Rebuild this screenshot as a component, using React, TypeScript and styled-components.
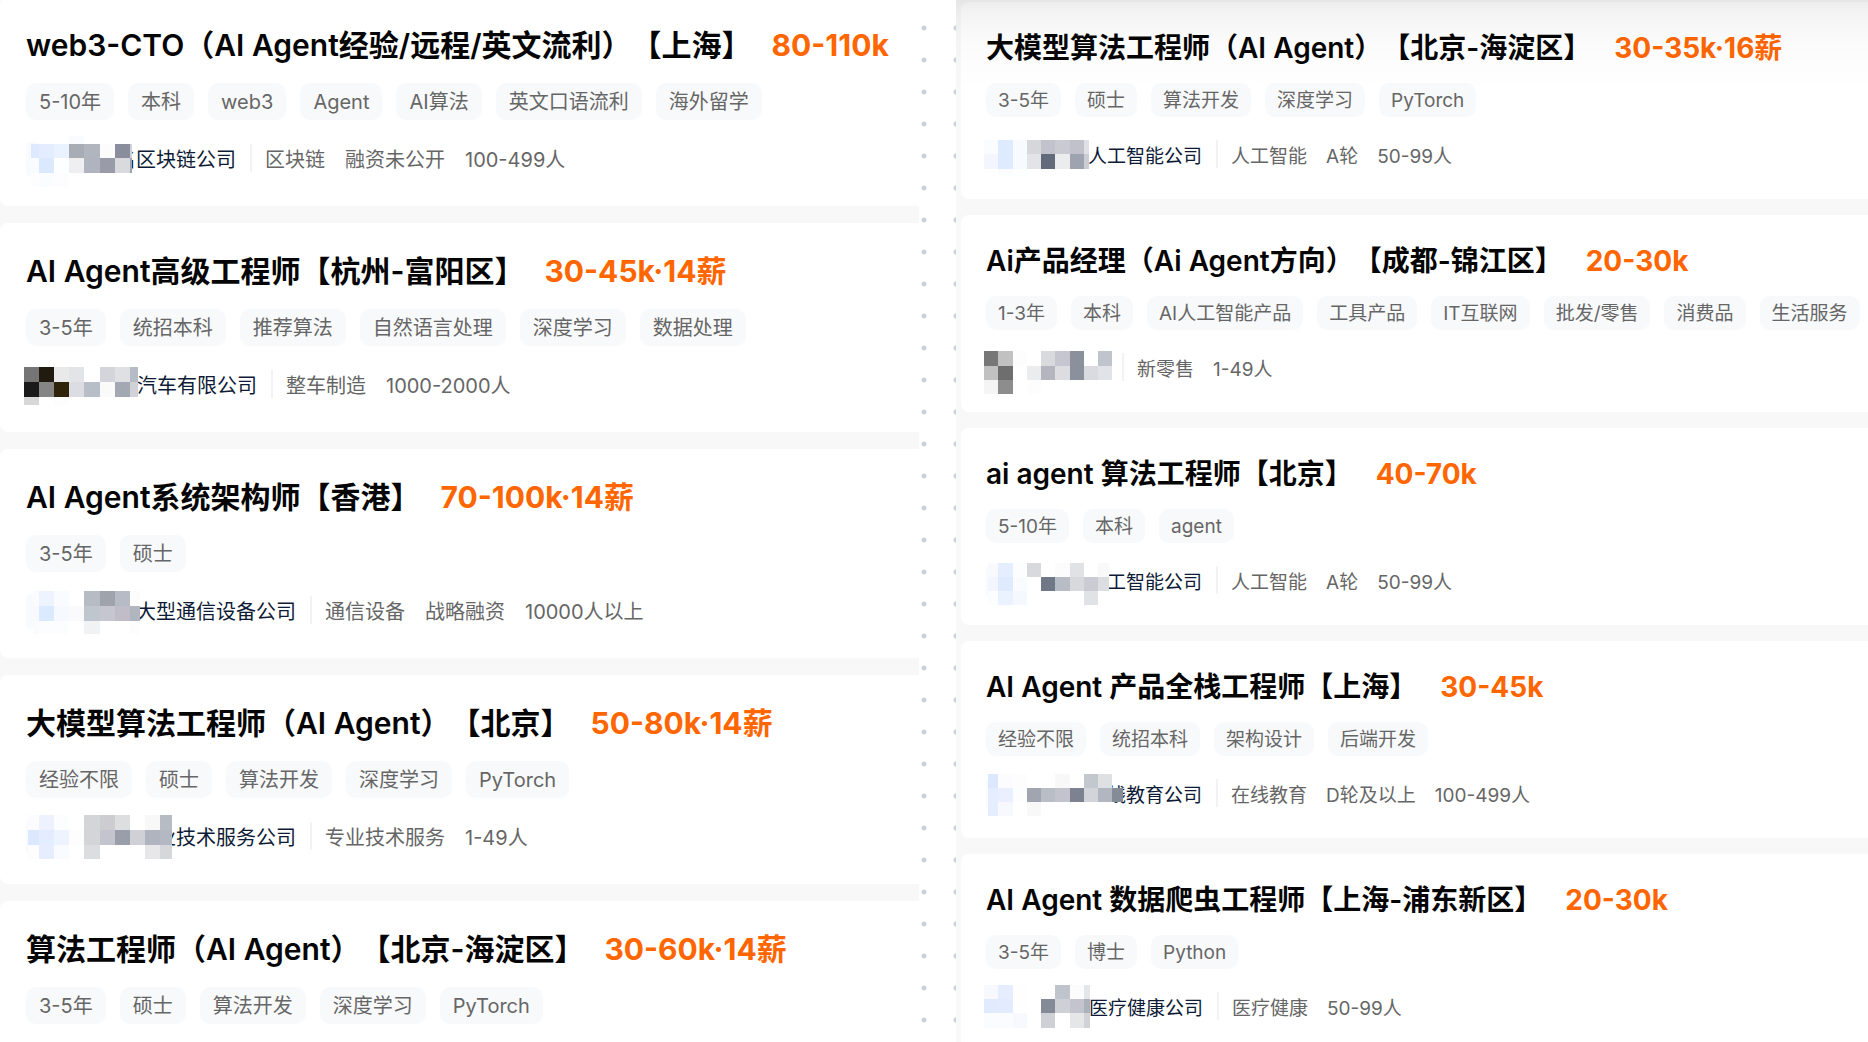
import React from 'react';
import styled, { createGlobalStyle } from 'styled-components';

const GlobalStyle = createGlobalStyle`
  * { box-sizing: border-box; }
  body {
    margin: 0;
    background: #ffffff;
    font-family: Inter, "Noto Sans CJK SC", sans-serif;
    text-spacing-trim: space-all;
  }
`;

type Size = 'large' | 'small';

const sizes = {
  large: { title: 30, text: 20, tagHeight: 37, tagPad: 13, tagGap: 14, logo: 36, top: 28, left: 26, bottom: 29, tagTop: 18, gap: 17, meta: 20 },
  small: { title: 28, text: 19, tagHeight: 34, tagPad: 12, tagGap: 14, logo: 34, top: 26, left: 25, bottom: 27, tagTop: 15, gap: 16, meta: 19 },
};

const Page = styled.main`
  display: grid;
  grid-template-columns: 919fr 37px 912fr;
  height: 100vh;
  overflow: hidden;
`;

const Panel = styled.section<{ $size: Size }>`
  position: relative;
  min-width: 0;
  overflow: hidden;
  background: #f8f8f8;
  padding-left: ${(p) => (p.$size === 'small' ? 5 : 0)}px;
`;

const TopShade = styled.div`
  position: absolute;
  inset: 0 0 auto 0;
  height: 92px;
  pointer-events: none;
  background: linear-gradient(rgba(0, 0, 0, 0.075), rgba(0, 0, 0, 0.045) 16%, rgba(0, 0, 0, 0.02) 42%, rgba(0, 0, 0, 0.006) 72%, transparent);
`;

const Gutter = styled.div`
  background: radial-gradient(circle, #cbd0da 2px, transparent 3px) -11px 12px / 32px 32px;
`;

const Feed = styled.ul<{ $size: Size }>`
  display: flex;
  flex-direction: column;
  gap: ${(p) => sizes[p.$size].gap}px;
  list-style: none;
  padding: 0;
  margin: ${(p) => (p.$size === 'small' ? 2 : -3)}px 0 0;
`;

const Card = styled.li<{ $size: Size }>`
  padding: ${(p) => `${sizes[p.$size].top}px 0 ${sizes[p.$size].bottom}px ${sizes[p.$size].left}px`};
  background: #ffffff;
  border-radius: 8px 0 0 8px;
  white-space: nowrap;
`;

const Heading = styled.div<{ $size: Size }>`
  display: flex;
  gap: ${(p) => (p.$size === 'small' ? 23 : 20)}px;
  font-size: ${(p) => sizes[p.$size].title}px;
  line-height: 40px;
`;

const Title = styled.h2`
  margin: 0;
  font-size: inherit;
  font-weight: 600;
  color: #050505;
`;

const Salary = styled.span`
  font-weight: 700;
  color: #ff6600;
`;

const Tags = styled.ul<{ $size: Size }>`
  display: flex;
  gap: ${(p) => sizes[p.$size].tagGap}px;
  margin: ${(p) => sizes[p.$size].tagTop}px 0 21px;
  padding: 0;
  list-style: none;
`;

const Tag = styled.li<{ $size: Size }>`
  height: ${(p) => sizes[p.$size].tagHeight}px;
  line-height: ${(p) => sizes[p.$size].tagHeight}px;
  padding: 1px ${(p) => sizes[p.$size].tagPad}px 0;
  border-radius: 10px;
  background: #f8f9fb;
  color: #666666;
  font-size: ${(p) => sizes[p.$size].text}px;
`;

const CompanyRow = styled.div<{ $size: Size }>`
  display: flex;
  align-items: center;
  height: ${(p) => sizes[p.$size].logo}px;
  padding-bottom: 2px;
  font-size: ${(p) => sizes[p.$size].text}px;
  color: #666666;
`;

const MosaicArt = styled.svg`
  position: relative;
  z-index: 1;
  flex: none;
  align-self: flex-start;
  overflow: visible;
  margin-left: -2px;
`;

const CompanyName = styled.span<{ $overlap: number }>`
  margin-left: -${(p) => p.$overlap}px;
  color: #0e1b36;
`;

const Divider = styled.span<{ $wide: boolean }>`
  width: 2px;
  height: 28px;
  margin: 0 13px 0 ${(p) => (p.$wide ? 14 : 10)}px;
  background: #f1f3f9;
`;

const Meta = styled.span<{ $size: Size }>`
  margin-right: ${(p) => sizes[p.$size].meta}px;
`;

type Band = { y: number; h: number; c: string };
type Company = { width: number; inset?: number; bands: Band[]; name?: string; overlap?: number; meta: string[] };
type Job = { title: string; salary: string; tags: string[]; company?: Company };

function Mosaic({ width, inset = 0, bands, size }: { width: number; inset?: number; bands: Band[]; size: Size }) {
  const cell = size === 'large' ? 15.1 : 14.25;
  const edge = (i: number) => Math.max(inset, Math.min(width, Math.round(i * cell)));
  return (
    <MosaicArt width={width} height={sizes[size].logo} shapeRendering="crispEdges" aria-hidden="true">
      {inset > 0 && <rect x={2} y={1} width={14} height={sizes[size].logo - 1} rx={5} fill="#f9fafe" />}
      {bands.map((band) =>
        band.c.split(' ').map((color, i) =>
          color === '-' ? null : (
            <rect key={`${band.y}-${i}`} x={edge(i)} y={band.y} width={edge(i + 1) - edge(i)} height={band.h} fill={`#${color}`} />
          ),
        ),
      )}
    </MosaicArt>
  );
}

const leftJobs: Job[] = [
  {
    title: 'web3-CTO（AI Agent经验/远程/英文流利）【上海】',
    salary: '80-110k',
    tags: ['5-10年', '本科', 'web3', 'Agent', 'AI算法', '英文口语流利', '海外留学'],
    company: {
      width: 108,
      inset: 7,
      name: '名区块链公司',
      overlap: 16,
      meta: ['区块链', '融资未公开', '100-499人'],
      bands: [
        { y: -5, h: 8, c: '- - - fafbff' },
        { y: 3, h: 14, c: 'dde9ff e4ecff eaf1ff a8acb5 b1b5be fcfcfc 8a8e9c d0d2d8' },
        { y: 17, h: 15, c: 'fafbff dbe9ff fdfeff efeff1 b0b4be 999ca8 d9dade 9fa3ad' },
        { y: 32, h: 14, c: 'fdfdff fbfcff fdfdff' },
      ],
    },
  },
  {
    title: 'AI Agent高级工程师【杭州-富阳区】',
    salary: '30-45k·14薪',
    tags: ['3-5年', '统招本科', '推荐算法', '自然语言处理', '深度学习', '数据处理'],
    company: {
      width: 114,
      name: '汽车有限公司',
      overlap: 1,
      meta: ['整车制造', '1000-2000人'],
      bands: [
        { y: 0, h: 15, c: '757575 211a0f e9e9e9 e3e4e7 - d4d5da dfe0e3 b6bcc6' },
        { y: 15, h: 15, c: '1a1a1a 858585 30230b dcdde2 b8bec8 fafafa a3a8b2 d0d2d7' },
        { y: 30, h: 8, c: 'd8d8d8 - fdfdfd' },
      ],
    },
  },
  {
    title: 'AI Agent系统架构师【香港】',
    salary: '70-100k·14薪',
    tags: ['3-5年', '硕士'],
    company: {
      width: 116,
      inset: 9,
      name: '大型通信设备公司',
      overlap: 4,
      meta: ['通信设备', '战略融资', '10000人以上'],
      bands: [
        { y: -2, h: 15, c: 'fafbff edf3ff f9fbff - b6bbc4 9fa3ac b7bbc5 fcfcfc' },
        { y: 13, h: 15, c: 'f7f9ff dceaff f6f9ff fafafc c0c6cd c6c6d0 c0bdc8 b0b5bf' },
        { y: 28, h: 13, c: 'fafbff fcfdff fcfdff - f0f2f4 - - fdfdfd' },
      ],
    },
  },
  {
    title: '大模型算法工程师（AI Agent）【北京】',
    salary: '50-80k·14薪',
    tags: ['经验不限', '硕士', '算法开发', '深度学习', 'PyTorch'],
    company: {
      width: 148,
      inset: 4,
      name: '业技术服务公司',
      overlap: 16,
      meta: ['专业技术服务', '1-49人'],
      bands: [
        { y: -4, h: 15, c: 'fcfcff eef2ff fcfdff - d4d5d9 ccccd1 dddee0 - f8f8f8 b6bbc4' },
        { y: 11, h: 15, c: 'dce8ff e4ecff edf3ff fdfdfd d4d5d9 c4c4ce 999eaa d0d1d6 afb4be b4b8c3' },
        { y: 26, h: 14, c: 'fdfdff e5edff fafbff - dcdde0 - - - e7e7e9 d6d7db' },
      ],
    },
  },
  {
    title: '算法工程师（AI Agent）【北京-海淀区】',
    salary: '30-60k·14薪',
    tags: ['3-5年', '硕士', '算法开发', '深度学习', 'PyTorch'],
  },
];

const rightJobs: Job[] = [
  {
    title: '大模型算法工程师（AI Agent）【北京-海淀区】',
    salary: '30-35k·16薪',
    tags: ['3-5年', '硕士', '算法开发', '深度学习', 'PyTorch'],
    company: {
      width: 105,
      name: '人工智能公司',
      overlap: 1,
      meta: ['人工智能', 'A轮', '50-99人'],
      bands: [
        { y: 2, h: 14, c: 'fafcff deebff f7faff d6d7da c2c2cc cacad3 c1c1cb dfe0e5' },
        { y: 16, h: 15, c: 'f3f6ff deebff f7faff e3e4e7 636a7a ebecee 9da3af cbccd4' },
        { y: 31, h: 6, c: '- fafcff fdfeff' },
      ],
    },
  },
  {
    title: 'Ai产品经理（Ai Agent方向）【成都-锦江区】',
    salary: '20-30k',
    tags: ['1-3年', '本科', 'AI人工智能产品', '工具产品', 'IT互联网', '批发/零售', '消费品', '生活服务'],
    company: {
      width: 128,
      meta: ['新零售', '1-49人'],
      bands: [
        { y: 0, h: 15, c: '777777 c1c1c1 fdfdfd - d9dade c6c6d0 8b909d - c0c4cd' },
        { y: 15, h: 14, c: 'c1c1c1 6e6e6e - ebecee b5b5c0 dddde1 8b909d dadbe0 e2e3e8' },
        { y: 29, h: 14, c: 'f5f5f5 8d8d8d - fdfdfd' },
      ],
    },
  },
  {
    title: 'ai agent 算法工程师【北京】',
    salary: '40-70k',
    tags: ['5-10年', '本科', 'agent'],
    company: {
      width: 125,
      inset: 4,
      name: '工智能公司',
      overlap: 2,
      meta: ['人工智能', 'A轮', '50-99人'],
      bands: [
        { y: -1, h: 14, c: 'f8faff e5eeff fcfdff d8d9dd - fcfcfc e1e2e6 - f9f9fa' },
        { y: 13, h: 14, c: 'f3f6ff deebff fafbff - 707786 b7bcc5 d8d9dd cbccd3 dcdde1' },
        { y: 27, h: 14, c: 'fcfdff eaf1ff f6f8ff - - - - e1e2e6' },
      ],
    },
  },
  {
    title: 'AI Agent 产品全栈工程师【上海】',
    salary: '30-45k',
    tags: ['经验不限', '统招本科', '架构设计', '后端开发'],
    company: {
      width: 139,
      inset: 4,
      name: '线教育公司',
      overlap: 16,
      meta: ['在线教育', 'D轮及以上', '100-499人'],
      bands: [
        { y: -3, h: 14, c: 'dce8ff fcfcfe fdfdfe - - f8f8f8 - c3c7ce dfe0e2' },
        { y: 11, h: 14, c: 'e5eeff eaf0ff fcfdff a1a5b0 b9bdc6 c3c3ce 7c828f d3d4d9 b2b6c0 868b98' },
        { y: 25, h: 14, c: 'e5eeff f7f9ff - f8f8f8' },
      ],
    },
  },
  {
    title: 'AI Agent 数据爬虫工程师【上海-浦东新区】',
    salary: '20-30k',
    tags: ['3-5年', '博士', 'Python'],
    company: {
      width: 106,
      name: '医疗健康公司',
      overlap: 1,
      meta: ['医疗健康', '50-99人'],
      bands: [
        { y: -5, h: 14, c: 'f7f9ff e6edff fefefe - - bfc3cc fcfcfc e5e6e8' },
        { y: 9, h: 14, c: 'e1eaff e3ebff fefefe - 848a97 cfd0d5 c3c4ce abb2bb' },
        { y: 23, h: 15, c: 'fbfcfd fbfcff f7f9ff - cfd0d5 - e5e6e8 d1d2d6' },
      ],
    },
  },
];

function JobCard({ job, size }: { job: Job; size: Size }) {
  const { company } = job;
  return (
    <Card $size={size}>
      <Heading $size={size}>
        <Title>{job.title}</Title>
        <Salary>{job.salary}</Salary>
      </Heading>
      <Tags $size={size}>
        {job.tags.map((tag) => (
          <Tag key={tag} $size={size}>{tag}</Tag>
        ))}
      </Tags>
      <CompanyRow $size={size}>
        {company && (
          <>
            <Mosaic width={company.width} inset={company.inset} bands={company.bands} size={size} />
            {company.name && <CompanyName $overlap={company.overlap ?? 0}>{company.name}</CompanyName>}
            <Divider $wide={Boolean(company.name)} />
            {company.meta.map((item) => (
              <Meta key={item} $size={size}>{item}</Meta>
            ))}
          </>
        )}
      </CompanyRow>
    </Card>
  );
}

export default function App() {
  return (
    <>
      <GlobalStyle />
      <Page lang="zh-CN">
        <Panel $size="large">
          <Feed $size="large">
            {leftJobs.map((job) => <JobCard key={job.title} job={job} size="large" />)}
          </Feed>
        </Panel>
        <Gutter />
        <Panel $size="small">
          <Feed $size="small">
            {rightJobs.map((job) => <JobCard key={job.title} job={job} size="small" />)}
          </Feed>
          <TopShade />
        </Panel>
      </Page>
    </>
  );
}
